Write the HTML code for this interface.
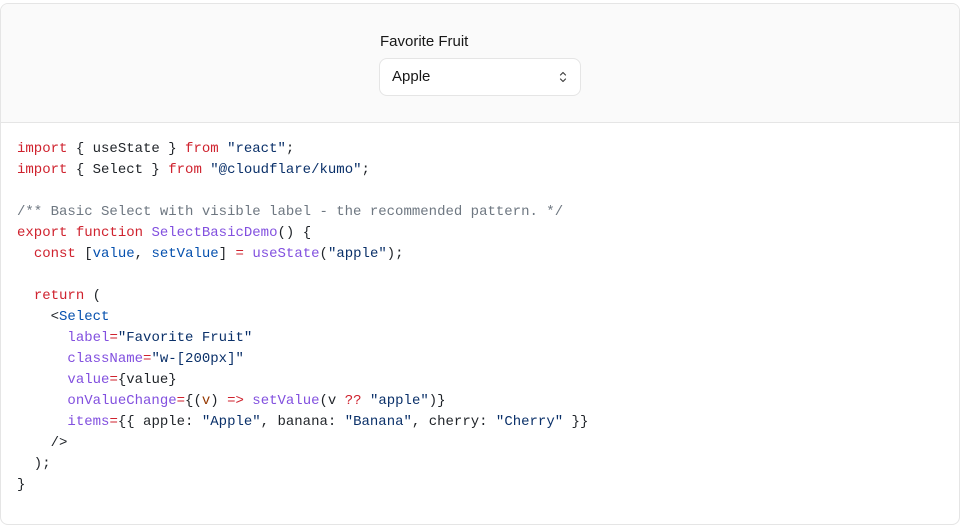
<!DOCTYPE html>
<html><head><style>
html,body{margin:0;padding:0;background:#fff;width:960px;height:510px;overflow:hidden;}
.card{position:absolute;left:0;top:3px;width:958px;height:520px;border:1px solid #e5e5e5;border-radius:8px;overflow:hidden;background:#fff;}
.top{height:118px;background:#fafafa;border-bottom:1px solid #e5e5e5;position:relative;}
.lbl{position:absolute;left:379px;top:29px;font:500 15px "Liberation Sans",sans-serif;color:#171717;}
.sel{position:absolute;left:378px;top:54px;width:202px;height:38px;box-sizing:border-box;border:1px solid #e5e5e5;border-radius:8px;background:#fff;font:15px "Liberation Sans",sans-serif;color:#171717;}
.sel span{position:absolute;left:12px;top:9px;}
.sel svg{position:absolute;right:12px;top:11px;}
pre{margin:0;position:absolute;left:16px;top:135px;font:14px/21px "Liberation Mono",monospace;color:#1f2328;}
.k{color:#cf222e}.s{color:#0a3069}.f{color:#8250df}.v{color:#0550ae}.c{color:#6e7781}.p{color:#953800}
</style></head><body>
<div class="card">
<div class="top">
<div class="lbl">Favorite Fruit</div>
<div class="sel"><span>Apple</span>
<svg width="10" height="14" viewBox="0 0 10 14" fill="none" stroke="#404040" stroke-width="1.2" stroke-linecap="round" stroke-linejoin="round"><path d="M2.5 5l2.5-2.5 2.5 2.5M2.5 9l2.5 2.5 2.5-2.5"/></svg></div>
</div>
<pre><span class="k">import</span> { useState } <span class="k">from</span> <span class="s">"react"</span>;
<span class="k">import</span> { Select } <span class="k">from</span> <span class="s">"@cloudflare/kumo"</span>;

<span class="c">/** Basic Select with visible label - the recommended pattern. */</span>
<span class="k">export</span> <span class="k">function</span> <span class="f">SelectBasicDemo</span>() {
  <span class="k">const</span> [<span class="v">value</span>, <span class="v">setValue</span>] <span class="k">=</span> <span class="f">useState</span>(<span class="s">"apple"</span>);

  <span class="k">return</span> (
    &lt;<span class="v">Select</span>
      <span class="f">label</span><span class="k">=</span><span class="s">"Favorite Fruit"</span>
      <span class="f">className</span><span class="k">=</span><span class="s">"w-[200px]"</span>
      <span class="f">value</span><span class="k">=</span>{value}
      <span class="f">onValueChange</span><span class="k">=</span>{(<span class="p">v</span>) <span class="k">=&gt;</span> <span class="f">setValue</span>(v <span class="k">??</span> <span class="s">"apple"</span>)}
      <span class="f">items</span><span class="k">=</span>{{ apple: <span class="s">"Apple"</span>, banana: <span class="s">"Banana"</span>, cherry: <span class="s">"Cherry"</span> }}
    /&gt;
  );
}</pre>
</div>
</body></html>
